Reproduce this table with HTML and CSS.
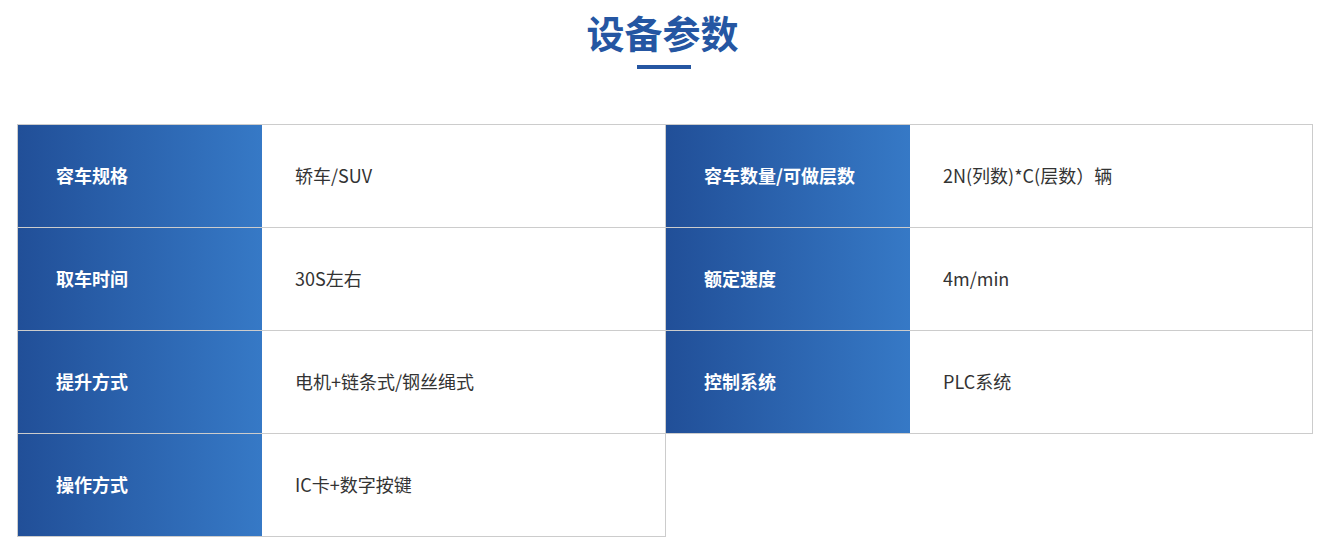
FILE: index.html
```html
<!DOCTYPE html>
<html lang="zh-CN">
<head>
<meta charset="utf-8">
<title>设备参数</title>
<link rel="stylesheet" href="styles.css">
</head>
<body>
<section class="params">
  <h2 class="title">设备参数</h2>
  <div class="title-bar"></div>
  <div class="table">
    <div class="item"><div class="label">容车规格</div><div class="value">轿车/SUV</div></div>
    <div class="item"><div class="label">容车数量/可做层数</div><div class="value">2N(列数)*C(层数）辆</div></div>
    <div class="item"><div class="label">取车时间</div><div class="value">30S左右</div></div>
    <div class="item"><div class="label">额定速度</div><div class="value">4m/min</div></div>
    <div class="item"><div class="label">提升方式</div><div class="value">电机+链条式/钢丝绳式</div></div>
    <div class="item"><div class="label">控制系统</div><div class="value">PLC系统</div></div>
    <div class="item"><div class="label">操作方式</div><div class="value">IC卡+数字按键</div></div>
  </div>
</section>
</body>
</html>
```
FILE: styles.css
```css
* { box-sizing: border-box; }
html, body { margin: 0; padding: 0; background: #fff; }
body {
  font-family: "Noto Sans CJK SC", "Noto Sans", sans-serif;
  color: #333;
}
.params {
  padding-top: 8px;
}
.title {
  margin: 0;
  text-align: center;
  font-size: 38px;
  line-height: 48px;
  font-weight: 700;
  color: #2556a2;
}
.title-bar {
  width: 54px;
  height: 4px;
  background: #2556a2;
  margin: 9px auto 0;
  position: relative;
  left: 1px;
}
.table {
  margin: 55px 0 0 17px;
  width: 1296px;
  display: grid;
  grid-template-columns: 649px 647px;
  border-top: 1px solid #ccc;
}
.item {
  display: flex;
  height: 103px;
  border-right: 1px solid #ccc;
  border-bottom: 1px solid #ccc;
}
.item:nth-child(odd) {
  border-left: 1px solid #ccc;
}
.label {
  width: 244px;
  flex: none;
  display: flex;
  align-items: center;
  padding-left: 38px;
  padding-bottom: 3px;
  background: linear-gradient(90deg, #214f98 0%, #3679c6 100%);
  color: #fff;
  font-size: 18px;
  font-weight: 700;
}
.value {
  flex: 1;
  display: flex;
  align-items: center;
  padding-left: 33px;
  padding-bottom: 3px;
  font-size: 18px;
  color: #333;
}
```
